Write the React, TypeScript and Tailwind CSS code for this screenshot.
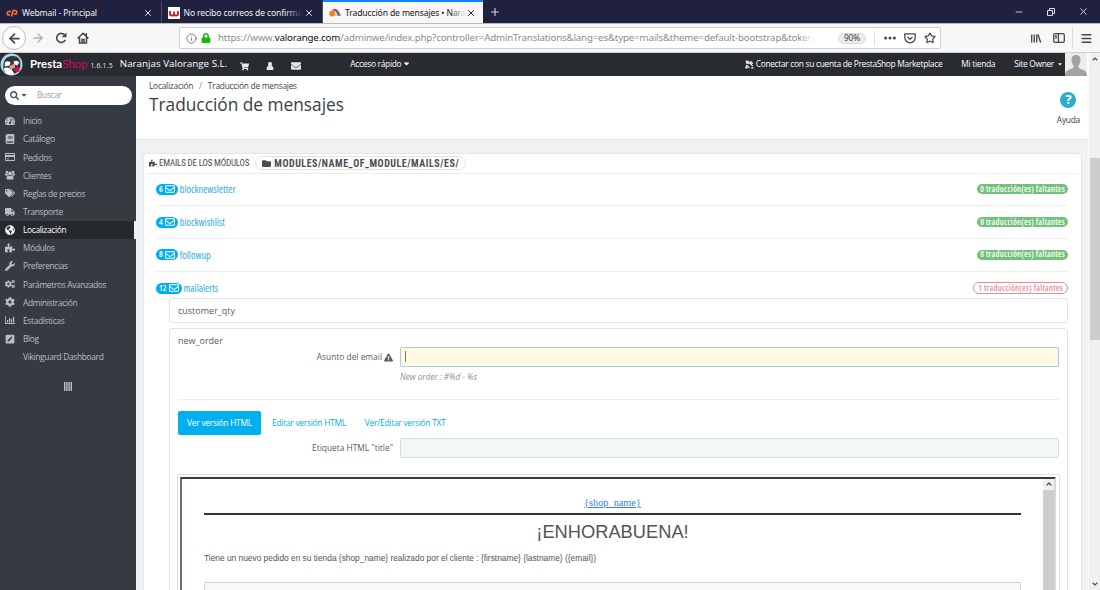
import type { ReactNode } from 'react';
import type { IconType } from 'react-icons';
import {
  FaBook,
  FaCaretDown,
  FaCog,
  FaCogs,
  FaEnvelope,
  FaExclamationTriangle,
  FaFolder,
  FaGlobeAmericas,
  FaLock,
  FaPenSquare,
  FaPuzzlePiece,
  FaRegEnvelope,
  FaSearch,
  FaShoppingCart,
  FaTachometerAlt,
  FaTags,
  FaTruck,
  FaWrench,
} from 'react-icons/fa';
import {
  ArrowLeft,
  ArrowRight,
  ChevronDown,
  ChevronUp,
  Info,
  Menu,
  Minus,
  Plus,
  Star,
  X,
} from 'lucide-react';
import clsx from 'clsx';

interface IconProps {
  className?: string;
}

function BarsIcon({ className }: IconProps) {
  return (
    <svg viewBox="0 0 20 16" className={className} fill="currentColor">
      <path d="M0 0h1.6v14.2H20V16H0zM4 8h2.4v5H4zM8 4h2.4v9H8zM12 6h2.4v7H12zM16 1.5h2.4V13H16z" />
    </svg>
  );
}

function CardIcon({ className }: IconProps) {
  return (
    <svg viewBox="0 0 20 16" className={className} fill="currentColor">
      <path fillRule="evenodd" d="M1.500 0h17Q20 0 20 1.500v13q0 1.500-1.500 1.500h-17Q0 16 0 14.500v-13Q0 0 1.500 0zM1.800 1.800v2h16.400v-2zM1.800 8v6.200h16.400V8zM3.500 11h5v1.600h-5z" />
    </svg>
  );
}

function GroupIcon({ className }: IconProps) {
  return (
    <svg viewBox="0 0 20 18" className={className} fill="currentColor">
      <circle cx="4" cy="3" r="2.600" />
      <circle cx="16" cy="3" r="2.600" />
      <circle cx="10" cy="6" r="3.800" />
      <path d="M0 10V7q0-1.500 1.500-1.500L5.300 6q0 2.500 1.700 4.200zM20 10V7q0-1.500-1.500-1.500L14.700 6q0 2.500-1.700 4.200zM3 16q0-6 3.700-6.200 3.300 2 6.600 0Q17 10 17 16q0 2-2 2H5q-2 0-2-2z" />
    </svg>
  );
}

function PersonIcon({ className }: IconProps) {
  return (
    <svg viewBox="0 0 14 16" className={className} fill="currentColor">
      <path d="M7 0a3.700 4 0 0 1 2.800 6.900Q14 8.500 14 13.500q0 2.500-2 2.500H2q-2 0-2-2.500 0-5 4.200-6.600A3.700 4 0 0 1 7 0z" />
    </svg>
  );
}

interface MenuItem {
  label: string;
  icon?: IconType | typeof BarsIcon;
  active?: boolean;
}

const menu: MenuItem[] = [
  { label: 'Inicio', icon: FaTachometerAlt },
  { label: 'Catálogo', icon: FaBook },
  { label: 'Pedidos', icon: CardIcon },
  { label: 'Clientes', icon: GroupIcon },
  { label: 'Reglas de precios', icon: FaTags },
  { label: 'Transporte', icon: FaTruck },
  { label: 'Localización', icon: FaGlobeAmericas, active: true },
  { label: 'Módulos', icon: FaPuzzlePiece },
  { label: 'Preferencias', icon: FaWrench },
  { label: 'Parámetros Avanzados', icon: FaCogs },
  { label: 'Administración', icon: FaCog },
  { label: 'Estadísticas', icon: BarsIcon },
  { label: 'Blog', icon: FaPenSquare },
  { label: 'Vikinguard Dashboard' },
];

const modules = [
  { name: 'blocknewsletter', mails: 6, missing: 0 },
  { name: 'blockwishlist', mails: 4, missing: 0 },
  { name: 'followup', mails: 8, missing: 0 },
  { name: 'mailalerts', mails: 12, missing: 1 },
];

function BrowserTab({ icon, title, active }: { icon: ReactNode; title: string; active?: boolean }) {
  return (
    <div
      className={clsx(
        'flex h-[23px] shrink-0 items-center border-t-2 pr-[8px] pl-[6px]',
        active
          ? 'w-[160px] border-[#0a84ff] bg-[#f7f7f8] text-[#15141a]'
          : 'w-[161.5px] border-transparent border-r border-r-[#4a4b66] text-[#f0f0f4]',
      )}
    >
      <span className="mr-[4px] flex w-[12px] justify-center">{icon}</span>
      <span className="relative mt-px text-[8.6px] tracking-[-0.13px] whitespace-nowrap">
        {title}
        {title.length > 20 && (
          <span
            className={clsx(
              'absolute inset-y-0 right-0 w-[16px] bg-linear-to-r from-transparent',
              active ? 'to-[#f7f7f8]' : 'to-[#20213f]',
            )}
          />
        )}
      </span>
      <X className="ml-auto size-[10px] shrink-0" strokeWidth={2.2} />
    </div>
  );
}

function TabStrip() {
  return (
    <div className="flex h-[23px] shrink-0 bg-[#20213f] font-['Noto_Sans',sans-serif]">
      <BrowserTab
        title="Webmail - Principal"
        icon={
          <svg viewBox="0 0 24 16" className="h-[8px] w-[12px]" fill="none" stroke="#ff6c2c" strokeWidth="3.2">
            <path d="M10 5H6a3.5 3.5 0 0 0 0 7h2M11 15l3.2-12H18a3.5 3.5 0 0 1 0 7h-3" />
          </svg>
        }
      />
      <BrowserTab
        title="No recibo correos de confirma"
        icon={
          <svg viewBox="0 0 12 12" className="size-[12px]">
            <path fill="#fff" d="M0 0h12v12H0z" />
            <path fill="none" stroke="#d0142c" strokeWidth="1.8" d="M2 4v3q0 1.600 2 1.600T6 7V4.500M6 7q0 1.600 2 1.600T10 7V4" />
          </svg>
        }
      />
      <BrowserTab
        active
        title="Traducción de mensajes • Nara"
        icon={
          <svg viewBox="0 0 24 18" className="h-[9px] w-[12px]">
            <path fill="#66707a" d="M6 4q7-6 13 2l5 9-6 1-5-9z" />
            <circle cx="6.5" cy="11" r="6" fill="#f58220" />
            <path fill="#f7b27a" d="M11 8l6 8h-6z" />
          </svg>
        }
      />
      <Plus className="mt-[6px] ml-[6px] size-[12px] text-[#c9c9d4]" strokeWidth={2.4} />
      <div className="ml-auto flex items-center gap-[22px] pr-[11px] text-[#dcdce6]">
        <Minus className="size-[10px]" strokeWidth={2} />
        <svg viewBox="0 0 10 10" className="size-[10px]" fill="none" stroke="currentColor">
          <path d="M1.5 3.5h5v5h-5zM3.5 3.5v-2h5v5h-2" />
        </svg>
        <X className="size-[11px]" strokeWidth={2} />
      </div>
    </div>
  );
}

function Toolbar() {
  return (
    <div className="flex h-[30px] shrink-0 items-center border-t border-[#b9b9c0] border-b border-b-[#cfcfd0] bg-[#f7f7f8] font-['Noto_Sans',sans-serif] text-[#47474b]">
      <div className="ml-[2px] flex size-[24px] items-center justify-center rounded-full border border-[#bcbcbe] bg-white">
        <ArrowLeft className="size-[15px]" strokeWidth={2.8} />
      </div>
      <ArrowRight className="ml-[5px] size-[14px] text-[#b0b0b2]" strokeWidth={2.4} />
      <svg viewBox="0 0 12 12" className="ml-[10px] size-[12px]">
        <path d="M9.800 3.200A4.500 4.500 0 1 0 10.300 7.800" fill="none" stroke="currentColor" strokeWidth="1.600" />
        <path d="M11.500.5v4.800H6.700z" fill="currentColor" />
      </svg>
      <svg viewBox="0 0 12 12" className="ml-[10px] size-[12px]" fill="none" stroke="currentColor" strokeWidth="1.500">
        <path d="M.6 6.500L6 1.200l5.400 5.300M2.500 5.500v5.600h7V5.500M5 11V7.400h2V11M9.300 1v3" />
      </svg>

      <div className="ml-[90px] flex h-[22px] w-[762px] items-center rounded-[2px] border border-[#cfcfd1] bg-white">
        <Info className="ml-[6px] size-[11px] text-[#737377]" strokeWidth={2} />
        <FaLock className="ml-[4px] size-[10px] text-[#12bc00]" />
        <div className="relative ml-[7px] pt-px text-[9.700px] tracking-[-0.150px] whitespace-nowrap text-[#8c8c8e]">
          https://www.<span className="text-[#0c0c0d]">valorange.com</span>
          /adminwe/index.php?controller=AdminTranslations&amp;lang=es&amp;type=mails&amp;theme=default-bootstrap&amp;token
          <span className="absolute inset-y-0 right-0 w-[14px] bg-linear-to-r from-transparent to-white" />
        </div>
        <span className="ml-auto flex h-[11px] w-[28px] items-center justify-center rounded-full border border-[#dcdcdc] bg-[#ececee] text-[8.400px] tracking-[-0.200px] text-[#3a3a3e]">
          90%
        </span>
        <span className="ml-[8px] h-[15px] w-px bg-[#e2e2e2]" />
        <svg viewBox="0 0 12 4" className="ml-[9px] h-[4px] w-[12px]" fill="currentColor">
          <circle cx="1.6" cy="2" r="1.5" />
          <circle cx="6" cy="2" r="1.5" />
          <circle cx="10.4" cy="2" r="1.5" />
        </svg>
        <svg viewBox="0 0 12 12" className="ml-[8px] size-[12px]" fill="none" stroke="currentColor" strokeWidth="1.3" strokeLinejoin="round">
          <path d="M.8 1.8h10.4V5.6a5.2 5.2 0 0 1-10.4 0zM3.5 5L6 7.3 8.5 5" />
        </svg>
        <Star className="mr-[4px] ml-[8px] size-[12px]" strokeWidth={2.4} />
      </div>

      <svg viewBox="0 0 12 10" className="ml-[89px] h-[9px] w-[12px]" fill="none" stroke="currentColor" strokeWidth="1.5">
        <path d="M1.2.5v9M4 .5v9M6.8.5v9M8.2.6l3 8.8" />
      </svg>
      <svg viewBox="0 0 12 10" className="ml-[11px] h-[10px] w-[12px]" fill="none" stroke="currentColor" strokeWidth="1.3">
        <rect x=".7" y=".7" width="10.6" height="8.6" rx="1.4" />
        <path d="M5.4.7v8.6M2 3h2M2 4.8h2" />
      </svg>
      <span className="ml-[7px] h-[22px] w-px bg-[#dededf]" />
      <Menu className="ml-[7px] size-[13px]" strokeWidth={2.6} />
    </div>
  );
}

function AdminHeader() {
  return (
    <header className="flex h-[23px] w-[1087px] shrink-0 items-center bg-[#282b30] text-[8.400px] text-[#e6e9ea]">
      <svg viewBox="0 0 24 24" className="size-[23px]">
        <circle cx="12" cy="12" r="11.5" fill="#a4dbed" />
        <path fill="#333" d="M4 19C2 8 6 3 13 3s9 5 8 12q-3 7-9 7-6-1-8-3z" />
        <path fill="#fff" d="M5 10q3-3 6 0l-1 3-5 1zM14 9q4-2 6 1l-2 3-3-1zM4 16q4-2 8 1l3 5q-6 2-10-2z" />
        <path fill="#d9a08c" d="M9 14l6-3 1 4-4 2z" />
        <path fill="#d6104f" d="M14 17l5-3 2 5-4 1z" />
      </svg>
      <span className="ml-[7px] pb-px font-['Lato',sans-serif] text-[11.400px] font-bold text-white">
        Presta<span className="font-normal text-[#df0067]">Shop</span>
      </span>
      <span className="ml-[3px] pt-[3px] text-[6.800px] tracking-[0.200px]">1.6.1.5</span>
      <span className="ml-[7px] text-[9.800px] whitespace-nowrap text-white">Naranjas Valorange S.L.</span>
      <FaShoppingCart className="mt-[3px] ml-[13px] size-[9px]" />
      <PersonIcon className="mt-[3px] ml-[17px] h-[8px] w-[8px]" />
      <FaEnvelope className="mt-[3px] ml-[17px] size-[10px]" />
      <span className="ml-[49px] flex items-center pb-px tracking-[-0.280px] text-white">
        Acceso rápido <FaCaretDown className="ml-px size-[9px]" />
      </span>
      <div className="ml-auto flex items-center tracking-[-0.300px] text-white">
        <svg viewBox="0 0 10 10" className="mr-[2px] size-[9px]" fill="none" stroke="currentColor" strokeWidth="1.3">
          <path d="M.8.8l2.5 2M3 1l5.6 5.8M1 3l3.5 1.2M5 8.8L2 6l-1 2.4L3 9.2M7 1l-1 2.5h3M7 8.8h2.4" />
        </svg>
        <span className="pb-px whitespace-nowrap">Conectar con su cuenta de PrestaShop Marketplace</span>
        <span className="ml-[19px] pb-px">Mi tienda</span>
        <span className="ml-[19px] flex items-center pb-px">
          Site Owner <FaCaretDown className="ml-[3px] size-[6px]" />
        </span>
        <svg viewBox="0 0 22 23" className="ml-[2px] h-[23px] w-[22px]">
          <path fill="#ececec" d="M0 0h22v23H0z" />
          <path fill="#a3a3a3" d="M11 2c3.6 0 4.8 2.6 4.4 5.8-.2 2.6-1.3 4-2 5 0 2 .8 2.8 3.6 3.8 3 1 5 2 5 6.4H0c0-4.400 2-5.400 5-6.400 2.800-1 3.600-1.800 3.600-3.800-.7-1-1.800-2.400-2-5C6.200 4.600 7.400 2 11 2z" />
        </svg>
      </div>
    </header>
  );
}

function Sidebar() {
  return (
    <nav className="w-[136px] shrink-0 bg-[#363a41] text-[8.400px] tracking-[-0.330px] text-[#b9bec7]">
      <div className="mt-[9.500px] ml-[5px] flex h-[19.500px] w-[127px] items-center rounded-full bg-white text-[#4a4d52]">
        <FaSearch className="ml-[5px] size-[9px]" />
        <FaCaretDown className="ml-px size-[8px]" />
        <span className="ml-[9px] pt-px text-[#a0a0a0]">Buscar</span>
      </div>
      <ul className="mt-[6.800px]">
        {menu.map(({ label, icon: Icon, active }) => (
          <li
            key={label}
            className={clsx(
              'flex h-[18.150px] items-center',
              active && 'border-r-2 border-[#eff1f2] bg-[#25282c] text-white',
            )}
          >
            <span className="flex w-[23px] justify-center pr-[3px]">{Icon && <Icon className="size-[10px]" />}</span>
            <span className="pt-[1.500px]">{label}</span>
          </li>
        ))}
      </ul>
      <svg viewBox="0 0 8 9" className="mx-auto mt-[16px] h-[9px] w-[8px]" fill="#b9bec7">
        <path d="M0 0h1.400v9H0zM2.200 0h1.400v9H2.200zM4.400 0h1.400v9H4.400zM6.600 0H8v9H6.600z" />
      </svg>
    </nav>
  );
}

function PageTitle() {
  return (
    <div className="flex h-[64px] justify-between border-b border-[#e4e7e8] bg-white pr-[8px] pl-[13px]">
      <div>
        <div className="mt-[4px] text-[8.400px] leading-[11px] tracking-[-0.250px] text-[#414552]">
          Localización <span className="mx-[4px] text-[#7d8a7d]">/</span> Traducción de mensajes
        </div>
        <h1 className="text-[17.300px] leading-[28px] text-[#3b4045]">Traducción de mensajes</h1>
      </div>
      <div className="mt-[16px] flex flex-col items-center text-[8.400px] tracking-[-0.250px] text-[#3b4045]">
        <span className="flex size-[16px] items-center justify-center rounded-full bg-[#2eacce] text-[13px] font-bold text-white">
          ?
        </span>
        <span className="mt-[6px]">Ayuda</span>
      </div>
    </div>
  );
}

function ModuleRow({ name, mails, missing }: (typeof modules)[number]) {
  return (
    <div
      className={clsx(
        'flex items-center justify-between [font-stretch:75%]',
        missing ? 'h-[26px] pt-[7px]' : 'h-[32.700px] border-b border-[#eceeef]',
      )}
    >
      <div className="flex items-center text-[#2fabe1]">
        <span className="flex h-[11px] items-center rounded-full bg-[#00aff0] px-[3px] text-[8.400px] font-semibold text-white">
          {mails}
          <FaRegEnvelope className="ml-[2px] size-[10px]" />
        </span>
        <span className="ml-[2px] pt-px text-[10.200px] font-medium">{name}</span>
      </div>
      <span
        className={clsx(
          'flex items-center rounded-full text-[8.400px] font-semibold tracking-[0.260px]',
          missing ? 'h-[12px] border border-[#e08f95] px-[4px] text-[#e08f95]' : 'h-[10px] bg-[#72c279] px-[3px] text-white',
        )}
      >
        {missing} traducción(es) faltantes
      </span>
    </div>
  );
}

function MailPreview() {
  return (
    <div className="mt-[16px] -mr-px -ml-px h-[130px] rounded-[2px] border border-[#dfe1e2] p-[2px] pr-[3px]">
      <div className="flex h-full border-2 border-t-[#3b3b3b] border-r-[#d8d8d8] border-b-0 border-l-[#6c6c6c]">
        <div className="flex-1 pr-[22px] pl-[22px]">
          <div className="mt-[17px] text-center font-['Liberation_Serif',serif] text-[10.300px] leading-[14px] text-[#337ff1] underline">
            {'{shop_name}'}
          </div>
          <div className="mt-[3px] h-[2.500px] bg-[#333]" />
          <div className="mt-[5px] text-center font-['Liberation_Sans',sans-serif] text-[18.300px] leading-[24px] text-[#555454]">
            ¡ENHORABUENA!
          </div>
          <div className="mt-[8px] font-['Liberation_Sans',sans-serif] text-[8.400px] leading-[12px] tracking-[-0.010px] text-[#555454]">
            {'Tiene un nuevo pedido en su tienda {shop_name} realizado por el cliente : {firstname} {lastname} ({email})'}
          </div>
          <div className="mt-[18px] h-[40px] border border-[#d6d4d4] bg-[#f8f8f8]" />
        </div>
        <div className="flex w-[11px] flex-col items-center bg-[#cdcdcd]">
          <span className="flex h-[11px] w-full items-center justify-center bg-[#f0f0f0]">
            <ChevronUp className="size-[8px] text-[#505050]" strokeWidth={4} />
          </span>
        </div>
      </div>
    </div>
  );
}

function NewOrderPanel() {
  return (
    <section className="mt-[5px] ml-[13px] h-[300px] rounded-[3px] border border-[#e1e4e6] px-[8px] text-[8.400px] text-[#5c5c5c]">
      <h3 className="mt-[6px] text-[9px] leading-[12px]">new_order</h3>
      <div className="flex">
        <label className="mr-[7px] flex w-[215px] items-center justify-end pt-[1.500px]">
          Asunto del email <FaExclamationTriangle className="ml-[2px] size-[9px]" />
        </label>
        <div className="flex h-[20px] flex-1 items-center rounded-[2px] border border-[#a5cbe4] bg-[#fffbe2] pl-[4px]">
          <span className="h-[11px] w-px bg-[#8a6d6d]" />
        </div>
      </div>
      <p className="mt-[3px] ml-[222px] pt-px text-[8.200px] leading-[12px] tracking-[-0.020px] text-[#8f8f8f] italic">
        New order : #%d - %s
      </p>
      <hr className="mt-[16px] border-[#eaedef]" />
      <div className="mt-[11px] flex h-[24px] items-center tracking-[-0.250px] text-[#00aff0]">
        <span className="flex h-full w-[83px] items-center justify-center rounded-[2px] bg-[#00aff0] pt-px text-white">
          Ver versión HTML
        </span>
        <span className="ml-[11px] pt-px">Editar versión HTML</span>
        <span className="ml-[19px] pt-px">Ver/Editar versión TXT</span>
      </div>
      <div className="mt-[3px] flex">
        <label className="mr-[7px] flex w-[215px] items-center justify-end pt-[1.500px]">Etiqueta HTML "title"</label>
        <div className="h-[20px] flex-1 rounded-[2px] border border-[#d3e0e6] bg-[#f4f7f8]" />
      </div>
      <MailPreview />
    </section>
  );
}

function PageScrollbar() {
  return (
    <div className="flex w-[11px] shrink-0 flex-col items-center bg-[#f0f0f0] text-[#505050]">
      <ChevronUp className="mt-[2px] size-[8px]" strokeWidth={3.500} />
      <div className="mt-[95px] h-[182px] w-[10px] bg-[#cdcdcd]" />
      <ChevronDown className="mt-auto mb-[2px] size-[8px]" strokeWidth={3.500} />
    </div>
  );
}

export default function App() {
  return (
    <div className="flex h-[590px] w-[1100px] flex-col overflow-hidden bg-white font-['Open_Sans',sans-serif]">
      <TabStrip />
      <Toolbar />
      <div className="flex min-h-0 flex-1">
        <div className="flex w-[1089px] flex-col overflow-hidden">
          <AdminHeader />
          <div className="flex min-h-0 flex-1">
            <Sidebar />
            <main className="w-[953px] overflow-hidden border-r border-[#f8f8f8] bg-[#eff1f2]">
              <PageTitle />
              <section className="mt-[13px] mr-[6px] ml-[7px] h-[460px] rounded-[3px] border border-[#e2e6e8] bg-white">
                <div className="mx-[3px] flex h-[19.500px] items-center border-b border-[#eceeef] pl-[2px] font-['Roboto','Open_Sans',sans-serif] text-[#4a4d52] [font-stretch:75%]">
                  <FaPuzzlePiece className="size-[8px]" />
                  <span className="ml-[2px] pt-px text-[9px] tracking-[-0.180px]">EMAILS DE LOS MÓDULOS</span>
                  <span className="ml-[6px] flex h-[14px] items-center rounded-full border border-[#e1e4e6] px-[6px] text-[10px] font-bold tracking-[0.520px]">
                    <FaFolder className="mr-[3px] size-[9px]" />
                    MODULES/NAME_OF_MODULE/MAILS/ES/
                  </span>
                </div>
                <div className="mr-[13px] ml-[12px]">
                  {modules.map((module) => (
                    <ModuleRow key={module.name} {...module} />
                  ))}
                  <div className="ml-[13px] flex h-[25px] items-center rounded-[3px] border border-[#e1e4e6] px-[8px] pt-px text-[9px] text-[#5c5c5c]">
                    customer_qty
                  </div>
                  <NewOrderPanel />
                </div>
              </section>
            </main>
          </div>
        </div>
        <PageScrollbar />
      </div>
    </div>
  );
}
